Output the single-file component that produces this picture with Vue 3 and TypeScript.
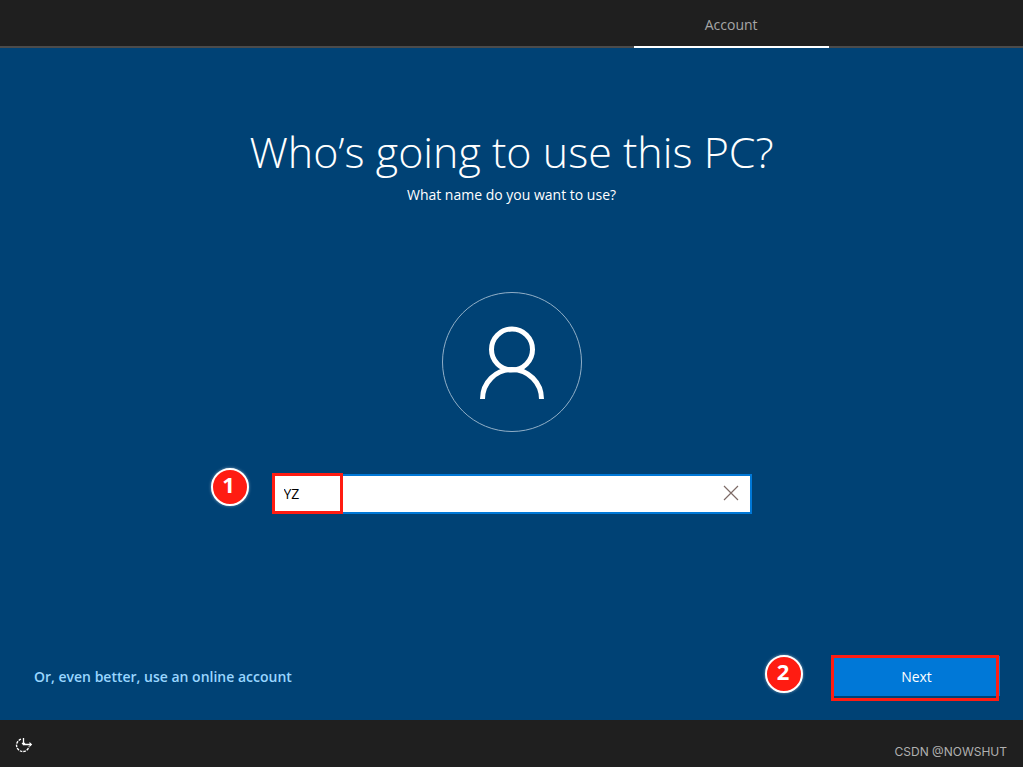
<script setup lang="ts">
import { ref } from 'vue'

const userName = ref<string>('YZ')

function clearName(): void {
  userName.value = ''
}
</script>

<template>
  <div class="setup">
    <nav class="steps" aria-label="Setup steps">
      <a class="step" href="#account" aria-current="step">Account</a>
    </nav>

    <main class="content">
      <h1 class="title">Who’s going to use this PC?</h1>
      <label class="subtitle" for="user-name">What name do you want to use?</label>

      <div class="avatar">
        <svg viewBox="0 0 140 140" fill="none" stroke="#fff" aria-hidden="true">
          <circle cx="70" cy="70" r="69.5" stroke="#91afc7" stroke-width="1" />
          <circle cx="70" cy="57.5" r="20.5" stroke-width="5" />
          <path d="M40.5 107 A29.5 29.5 0 0 1 99.5 107" stroke-width="5" />
        </svg>
      </div>

      <div class="field">
        <input id="user-name" v-model="userName" class="field-input" type="text" autocomplete="off" />
        <button class="clear" type="button" aria-label="Clear name" @click="clearName">
          <svg viewBox="0 0 16 16" width="16" height="16" fill="none" stroke="#7d6a66" stroke-width="1.2">
            <path d="M1 1 L15 15 M15 1 L1 15" />
          </svg>
        </button>
        <span class="frame frame-name"></span>
        <span class="badge badge-name">1</span>
      </div>

      <div class="actions">
        <a class="online" href="#online">Or, even better, use an online account</a>
        <div class="next-wrap">
          <button class="next" type="button">Next</button>
          <span class="frame frame-next"></span>
          <span class="badge badge-next">2</span>
        </div>
      </div>
    </main>

    <footer class="bar">
      <button class="ease" type="button" aria-label="Ease of access">
        <svg viewBox="0 0 18 16" width="18" height="16" fill="none" stroke="#fff">
          <path d="M6 2.2 A6.3 6.3 0 1 0 14 9.6" stroke-width="1.4" stroke-dasharray="2.6 1" />
          <path d="M8.5 1 V7.5 H16" stroke-width="1.3" />
          <path d="M7 6 L8.5 7.5 L10 6 M14.4 5.6 L16.4 7.5 L14.4 9.4" stroke-width="1.1" />
        </svg>
      </button>
      <span class="credit">CSDN @NOWSHUT</span>
    </footer>
  </div>
</template>

<style>
body {
  margin: 0;
  background: #004275;
}
</style>

<style scoped>
.setup {
  display: flex;
  flex-direction: column;
  min-height: 100vh;
  background: #004275;
  color: #fff;
  font-family: "Open Sans", "Noto Sans", sans-serif;
  font-size: 14px;
  line-height: 20px;
}

.steps {
  display: flex;
  justify-content: flex-end;
  box-sizing: border-box;
  height: 48px;
  padding-right: 19%;
  background: #1f1f1f;
  border-bottom: 2px solid #4b4b4b;
}

.step {
  box-sizing: border-box;
  width: 195px;
  height: 48px;
  border-bottom: 2px solid #fff;
  color: #a6a6a6;
  line-height: 50px;
  text-align: center;
  text-decoration: none;
}

.content {
  display: flex;
  flex: 1;
  flex-direction: column;
  align-items: center;
}

.title {
  margin: 72px 0 1px;
  font-size: 43px;
  font-weight: 300;
  line-height: 64px;
}

.avatar {
  width: 140px;
  height: 140px;
  margin-top: 87px;
}

.avatar svg {
  display: block;
}

.field {
  position: relative;
  display: flex;
  box-sizing: border-box;
  width: 480px;
  max-width: 90%;
  height: 40px;
  margin-top: 42px;
  background: #fff;
  border: 2px solid #0078d7;
}

.field-input {
  flex: 1;
  min-width: 0;
  padding: 0 10px;
  border: 0;
  outline: 0;
  background: transparent;
  color: #000;
  font: inherit;
}

.clear {
  display: grid;
  place-items: center;
  width: 38px;
  padding: 0 0 2px;
  border: 0;
  background: transparent;
}

.frame {
  position: absolute;
  box-sizing: border-box;
  border: 3px solid #ff1c12;
  pointer-events: none;
}

.frame-name {
  top: -3px;
  left: -2px;
  width: 71px;
  height: 41px;
}

.frame-next {
  top: -1px;
  left: -2px;
  width: 168px;
  height: 46px;
}

.badge {
  position: absolute;
  box-sizing: border-box;
  width: 38px;
  height: 38px;
  padding-right: 2px;
  border: 2px solid #fff;
  border-radius: 50%;
  background: #ff1c12;
  box-shadow: 0 0 3px rgba(255, 255, 255, 0.5);
  font-size: 22px;
  font-weight: 700;
  line-height: 29px;
  text-align: center;
}

.badge-name {
  top: -8px;
  left: -63px;
}

.badge-next {
  top: -1px;
  left: -68px;
}

.actions {
  display: flex;
  align-items: center;
  justify-content: space-between;
  align-self: stretch;
  margin-top: auto;
  padding: 0 23px 24px 34px;
}

.online {
  padding-top: 2px;
  color: #99d6ff;
  font-weight: 600;
  text-decoration: none;
}

.next-wrap {
  position: relative;
}

.next {
  display: block;
  width: 167px;
  height: 40px;
  padding: 2px 0 0;
  border: 0;
  background: #0078d7;
  color: #fff;
  font: inherit;
}

.bar {
  display: flex;
  align-items: center;
  justify-content: space-between;
  box-sizing: border-box;
  height: 47px;
  padding: 0 16px 0 15px;
  background: #1f1f1f;
}

.ease {
  display: grid;
  padding: 2px 0 0;
  border: 0;
  background: transparent;
}

.credit {
  padding-top: 16px;
  color: #b0b0b0;
  font-family: Inter, sans-serif;
  font-size: 12px;
}
</style>
